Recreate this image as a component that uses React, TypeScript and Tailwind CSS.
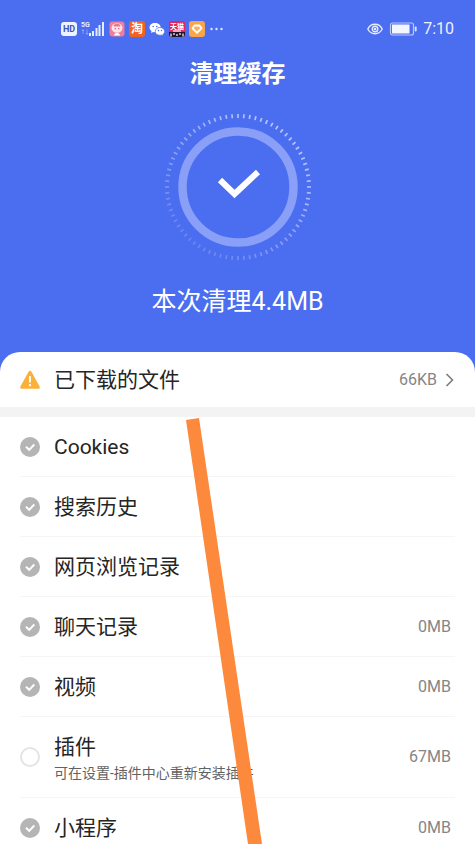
import React from "react";

type Item = { id: string; label: string; size?: string; note?: string; checked: boolean };

const items: Item[] = [
  { id: "cookies", label: "Cookies", checked: true },
  { id: "search", label: "搜索历史", checked: true },
  { id: "browse", label: "网页浏览记录", checked: true },
  { id: "chat", label: "聊天记录", size: "0MB", checked: true },
  { id: "video", label: "视频", size: "0MB", checked: true },
  { id: "plugin", label: "插件", size: "67MB", note: "可在设置-插件中心重新安装插件", checked: false },
  { id: "mini", label: "小程序", size: "0MB", checked: true },
];

function Signal() {
  return (
    <svg className="h-4 w-6" viewBox="0 0 24 16" fill="#e6ecff">
      <text x="0" y="6" fontSize="7" fontWeight="700" fontFamily="Roboto, sans-serif">5G</text>
      <path d="M2 9v4M1 10l1-1.500 1 1.500M6 8.500v4.500M5 12l1 1.500 1-1.500" stroke="#fff" strokeWidth="0.8" fill="none" opacity="0.4" />
      <rect x="8" y="12" width="2" height="3" />
      <rect x="11" y="10" width="2" height="5" />
      <rect x="14.500" y="7" width="2" height="8" />
      <rect x="17.500" y="4" width="2" height="11" />
      <rect x="21" y="1" width="2" height="14" />
    </svg>
  );
}

function PinkApp() {
  return (
    <svg className="h-4 w-4" viewBox="0 0 16 16">
      <rect x="0.500" y="0.500" width="15" height="15" rx="3" fill="#f17c9c" />
      <ellipse cx="8" cy="7" rx="5.500" ry="4.800" fill="#fbe5e8" />
      <path d="M4.500 4.500c1-2.500 6-2.500 7 0l-.5 1h-6z" fill="#e8788c" />
      <path d="M6.300 7.300v1M9.700 7.300v1" stroke="#c8364e" strokeWidth="1.200" />
      <path d="M5 14.500c0-3.500 6-3.500 6 0z" fill="#fff" />
    </svg>
  );
}

function WeChat() {
  return (
    <svg className="h-4 w-4" viewBox="0 0 16 16">
      <path d="M6 2C2.700 2 .5 4 .5 6.600c0 1.500.8 2.700 2 3.500L2 12l2.100-1.100c.6.2 1.200.3 1.900.3 3.300 0 5.700-2 5.700-4.600S9.300 2 6 2z" fill="#fff" />
      <path d="M11 6.500c-2.800 0-4.800 1.700-4.800 3.900s2 3.900 4.800 3.900c.6 0 1.100-.1 1.600-.2l1.600.9-.4-1.600c1.100-.7 1.800-1.800 1.800-3 0-2.200-1.900-3.900-4.600-3.900z" fill="#fff" stroke="#4b6df0" strokeWidth="0.7" />
      <g fill="#4b6df0">
        <circle cx="4.200" cy="5.500" r=".8" />
        <circle cx="7.800" cy="5.500" r=".8" />
        <circle cx="9.400" cy="9.500" r=".7" />
        <circle cx="12.500" cy="9.500" r=".7" />
      </g>
    </svg>
  );
}

function Tmall() {
  return (
    <svg className="h-4 w-4" viewBox="0 0 16 16">
      <rect width="16" height="16" rx="3" fill="#e5235f" />
      <path d="M0 11h16v2a3 3 0 0 1-3 3H3a3 3 0 0 1-3-3z" fill="#24142c" />
      <text x="8" y="7.500" textAnchor="middle" fontSize="7" fontWeight="700" fill="#fff" fontFamily="Noto Sans CJK SC, sans-serif">天猫</text>
      <path d="M4 9h8v2H4z" fill="#f8a5c0" />
      <path d="M2 15.500v-3M5 14v-2M8 15v-2M11 14v-2M14 15.500v-3" stroke="#fff" strokeWidth="1.200" />
    </svg>
  );
}

function HeartApp() {
  return (
    <svg className="h-4 w-4" viewBox="0 0 16 16">
      <rect width="16" height="16" rx="3" fill="#f9a548" />
      <path d="M5.500 4.500h5L12.500 7.300l-4.500 4.500-4.500-4.500z" fill="#f7b268" stroke="#fff" strokeWidth="1.900" strokeLinejoin="round" />
    </svg>
  );
}

function StatusBar() {
  return (
    <div className="flex h-[58px] shrink-0 items-center justify-between pr-[21px] pl-[61px]">
      <div className="flex items-center gap-1">
        <span className="flex h-[14px] w-4 items-center justify-center rounded-[3px] bg-[#eff3ff] text-[9px] leading-none font-bold text-[#3d57bd]">HD</span>
        <Signal />
        <PinkApp />
        <span className="flex h-4 w-4 items-center justify-center rounded-[3px] bg-[#f26322] text-[12px] leading-none font-bold text-white">淘</span>
        <WeChat />
        <Tmall />
        <HeartApp />
        <svg className="h-4 w-4" viewBox="0 0 16 16" fill="#dfe6ff">
          <circle cx="2.500" cy="8" r="1.200" />
          <circle cx="7.500" cy="8" r="1.200" />
          <circle cx="12.500" cy="8" r="1.200" />
        </svg>
      </div>
      <div className="flex items-center gap-[6px]">
        <svg className="h-4 w-4" viewBox="0 0 16 16" fill="none" stroke="#e6ecff" strokeWidth="1.400">
          <path d="M.8 8C3.800 1.700 12.200 1.700 15.200 8 12.200 14.300 3.800 14.300.8 8z" />
          <circle cx="8" cy="8" r="2.800" />
          <circle cx="8" cy="8" r="1.300" fill="#e6ecff" stroke="none" />
        </svg>
        <svg className="h-4 w-7" viewBox="0 0 28 16">
          <rect x="1.500" y="2" width="23" height="12" rx="2" fill="none" stroke="#bcc9fb" strokeWidth="1.200" />
          <rect x="3" y="3.500" width="17.500" height="9" fill="#f3f6ff" />
          <rect x="25.800" y="5.500" width="1.800" height="5" rx=".8" fill="#dfe6ff" />
        </svg>
        <span className="text-[16px] leading-5 text-[#eef2ff]">7:10</span>
      </div>
    </div>
  );
}

function Dial() {
  const ticks = Array.from({ length: 76 }, (_, i) => i);
  return (
    <svg className="h-[150px] w-[150px]" viewBox="-75 -75 150 150">
      {ticks.map((i) => {
        const angle = (i * 360) / 76;
        const fade = (1 + Math.cos(((angle - 40) * Math.PI) / 180)) / 2;
        return (
          <line key={i} x1="0" y1="-73" x2="0" y2="-69" stroke="#fff" strokeWidth="1.700" opacity={0.17 + 0.45 * fade} transform={`rotate(${angle})`} />
        );
      })}
      <circle r="55.500" fill="none" stroke="#899ff8" strokeWidth="8.500" />
      <path d="M-18-7-3.500 7 20-15" fill="none" stroke="#fff" strokeWidth="6" />
    </svg>
  );
}

function Tick({ item }: { item: Item }) {
  return (
    <span className="grid h-5 w-5 shrink-0">
      <input
        id={item.id}
        type="checkbox"
        defaultChecked={item.checked}
        className="peer col-start-1 row-start-1 h-5 w-5 appearance-none rounded-full border-2 border-[#e4e4e4] bg-white checked:border-0 checked:bg-[#b5b5b5]"
      />
      <svg className="pointer-events-none invisible col-start-1 row-start-1 h-5 w-5 peer-checked:visible" viewBox="0 0 20 20" fill="none" stroke="#fff" strokeWidth="1.900">
        <path d="M6 9.800 9.200 12.800 14.300 7.500" />
      </svg>
    </span>
  );
}

export default function App() {
  return (
    <main className="relative flex h-screen flex-col overflow-hidden bg-[#4b6df0] font-['Roboto','Noto_Sans_CJK_SC',sans-serif]">
      <StatusBar />
      <header className="flex shrink-0 flex-col items-center text-white">
        <h1 className="text-[24px] leading-8 font-bold">清理缓存</h1>
        <div className="mt-[22px]">
          <Dial />
        </div>
        <p className="mt-[22px] mb-8 text-[25px] leading-9">本次清理4.4MB</p>
      </header>

      <section className="shrink-0 rounded-t-[20px] bg-white text-[21px] leading-8 text-[#252525]">
        <button type="button" className="flex h-[55px] w-full items-center pr-5 pl-5 text-left">
          <svg className="h-5 w-5 shrink-0" viewBox="0 0 20 20">
            <path d="M10 2.200 18.300 17.300H1.700z" fill="#fbb03b" stroke="#fbb03b" strokeWidth="3" strokeLinejoin="round" />
            <path d="M10 6v6.500M10 14v2.200" stroke="#fff" strokeWidth="1.800" />
          </svg>
          <span className="ml-[14px] flex-1">已下载的文件</span>
          <span className="text-[16px] text-[#858585]">66KB</span>
          <svg className="ml-[6px] h-4 w-3" viewBox="0 0 12 16" fill="none" stroke="#7c7c7c" strokeWidth="1.600">
            <path d="M3.500 2 9.500 8 3.500 14" />
          </svg>
        </button>
        <div className="h-[10px] bg-[#f3f3f3]" />
        <ul>
          {items.map((item) => (
            <li key={item.id} className="px-5">
              <label htmlFor={item.id} className={`flex items-center gap-[14px] border-b border-[#f5f5f5] pr-1 ${item.note ? "h-[81px]" : "h-[60px]"}`}>
                <Tick item={item} />
                <span className="flex flex-1 flex-col">
                  <span>{item.label}</span>
                  {item.note && <span className="text-[14px] leading-5 text-[#626262]">{item.note}</span>}
                </span>
                {item.size && <span className="text-[16px] text-[#858585]">{item.size}</span>}
              </label>
            </li>
          ))}
        </ul>
      </section>

      <svg className="pointer-events-none absolute top-[418px] left-[186px] h-[426px] w-[76px]" viewBox="0 0 76 426">
        <path d="M0 2 13 0 76 426H62z" fill="#fd8a3c" />
      </svg>
    </main>
  );
}
